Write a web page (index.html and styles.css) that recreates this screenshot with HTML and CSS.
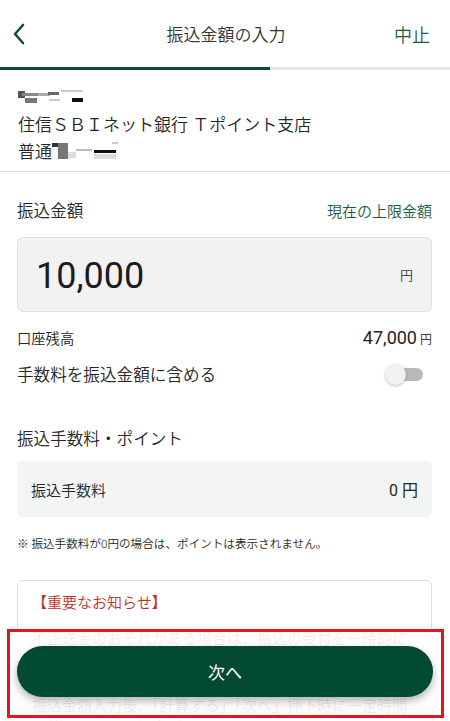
FILE: index.html
```html
<!DOCTYPE html>
<html lang="ja">
<head>
    <meta charset="UTF-8">
    <meta name="viewport" content="width=device-width, initial-scale=1.0">
    <title>振込金額の入力</title>
    <link rel="stylesheet" href="styles.css">
</head>
<body>
    <div class="screen">
        <header class="header">
            <svg class="back" width="14" height="22" viewBox="0 0 14 22">
                <path d="M11 2 L3 11 L11 20" fill="none" stroke="#124d37" stroke-width="2.6" stroke-linecap="round" stroke-linejoin="round"/>
            </svg>
            <h1 class="title">振込金額の入力</h1>
            <span class="cancel">中止</span>
        </header>
        <div class="progress"><div class="progress-bar"></div></div>

        <!-- 振込先 -->
        <section class="payee">
            <div class="payee-line">
                <svg class="mask" width="66" height="18" viewBox="0 0 66 18">
                    <rect x="0" y="3" width="7" height="7" fill="#555"/>
                    <rect x="4" y="5" width="16" height="3" fill="#888"/>
                    <rect x="7" y="10" width="12" height="5" fill="#777"/>
                    <rect x="20" y="5" width="12" height="3" fill="#aaa"/>
                    <rect x="30" y="4" width="11" height="3" fill="#666"/>
                    <rect x="43" y="2" width="22" height="2" fill="#ccc"/>
                    <rect x="31" y="11" width="11" height="2" fill="#ccc"/>
                    <rect x="54" y="10" width="11" height="4" fill="#111"/>
                </svg>
            </div>
            <div class="payee-line">住信ＳＢＩネット銀行 Ｔポイント支店</div>
            <div class="payee-line">普通<svg class="mask" width="66" height="18" viewBox="0 0 66 18">
                    <rect x="0" y="1" width="6" height="4" fill="#333"/>
                    <rect x="6" y="1" width="10" height="16" fill="#777"/>
                    <rect x="16" y="10" width="8" height="6" fill="#ddd"/>
                    <rect x="24" y="7" width="16" height="2" fill="#bbb"/>
                    <rect x="42" y="8" width="22" height="3" fill="#111"/>
                    <rect x="42" y="12" width="22" height="5" fill="#ddd"/>
                    <rect x="60" y="0" width="6" height="2" fill="#ccc"/>
                </svg></div>
        </section>

        <!-- 振込金額 -->
        <section class="form">
            <div class="row label-row">
                <span class="label">振込金額</span>
                <span class="link">現在の上限金額</span>
            </div>
            <div class="amount-box">
                <span class="amount">10,000</span>
                <span class="yen">円</span>
            </div>
            <div class="row balance-row">
                <span class="small-label">口座残高</span>
                <span class="balance">47,000<small>円</small></span>
            </div>
            <div class="row toggle-row">
                <span class="label">手数料を振込金額に含める</span>
                <span class="toggle"><span class="knob"></span></span>
            </div>

            <h2 class="label section-title">振込手数料・ポイント</h2>
            <div class="fee-box">
                <span>振込手数料</span>
                <span class="fee">0 円</span>
            </div>
            <p class="note">※ 振込手数料が0円の場合は、ポイントは表示されません。</p>

            <div class="notice">
                <p class="notice-title">【重要なお知らせ】</p>
                <p class="notice-text">不正送金のおそれがある場合は、振込の受付を一時的に停止させていただく場合があります。</p>
                <p class="notice-text">振込金額入力後、「計算する」「次へ」押下時に一定時間お待ちいただく場合があります。</p>
            </div>
        </section>

        <div class="footer">
            <button class="next">次へ</button>
        </div>
        <div class="highlight"></div>
    </div>
</body>
</html>
```

FILE: styles.css
```css
* {
    box-sizing: border-box;
}

body {
    margin: 0;
    font-family: Roboto, "Noto Sans CJK JP", sans-serif;
    font-weight: 350;
    color: #262626;
    background-color: #fff;
}

.screen {
    position: relative;
    width: 450px;
    height: 721px;
    overflow: hidden;
}

.header {
    display: flex;
    align-items: center;
    justify-content: space-between;
    height: 67px;
    padding: 0 20px 0 12px;
}

.back {
    display: block;
}

.title {
    margin: 0 0 0 32px;
    font-size: 17px;
    font-weight: 350;
    color: #333;
}

.cancel {
    font-size: 18px;
    color: #1d5a42;
}

.progress {
    height: 3px;
    background-color: #e6e6e6;
}

.progress-bar {
    width: 270px;
    height: 3px;
    background-color: #0d4a34;
}

.payee {
    padding: 13px 18px 7px;
    border-bottom: 1px solid #dedede;
}

.payee-line {
    display: flex;
    align-items: center;
    height: 27px;
    font-size: 17px;
    color: #262626;
}

.mask {
    display: block;
}

.form {
    padding: 0 18px 0 17px;
}

.row {
    display: flex;
    align-items: center;
    justify-content: space-between;
}

.label {
    font-size: 16.6px;
    font-weight: 350;
    color: #262626;
}

.label-row {
    height: 26px;
    margin-top: 25px;
}

.link {
    font-size: 15px;
    color: #1d5a42;
}

.amount-box {
    display: flex;
    align-items: center;
    justify-content: space-between;
    height: 75px;
    margin-top: 14px;
    padding: 0 18px 0 18px;
    background-color: #f2f2f2;
    border: 1px solid #e0e0e0;
    border-radius: 6px;
}

.amount {
    font-size: 36px;
    font-weight: 400;
    color: #1c1c1c;
    margin-top: 2px;
}

.yen {
    font-size: 13px;
    color: #333;
}

.balance-row {
    height: 26px;
    margin-top: 12px;
}

.small-label {
    font-size: 14.3px;
}

.balance {
    font-size: 18px;
    font-weight: 400;
    color: #222;
}

.balance small {
    margin-left: 3px;
    font-size: 12px;
    font-weight: 350;
}

.toggle-row {
    height: 30px;
    margin-top: 9px;
}

.toggle {
    position: relative;
    width: 27px;
    height: 13px;
    margin-right: 9px;
    border-radius: 7px;
    background-color: #b8b8b8;
}

.knob {
    position: absolute;
    left: -11px;
    top: -4px;
    width: 21px;
    height: 21px;
    border-radius: 50%;
    background-color: #f1f1f1;
    box-shadow: 0 1px 3px rgba(0, 0, 0, 0.25);
}

.section-title {
    margin: 38px 0 0;
    line-height: 26px;
}

.fee-box {
    display: flex;
    align-items: center;
    justify-content: space-between;
    height: 56px;
    margin-top: 8px;
    padding: 0 14px;
    background-color: #f3f5f5;
    border-radius: 6px;
    font-size: 15px;
}

.fee {
    font-size: 16px;
    font-weight: 400;
}

.note {
    margin: 18px 0 0;
    font-size: 11.6px;
    line-height: 18px;
    color: #262626;
}

.notice {
    margin-top: 27px;
    padding: 11px 16px 20px 14px;
    border: 1px solid #dcdcdc;
    border-radius: 6px;
}

.notice-title {
    margin: 0;
    font-size: 15px;
    line-height: 22px;
    color: #c0302b;
}

.notice-text {
    margin: 14px 0 0;
    font-size: 15px;
    line-height: 22px;
    color: #c0302b;
}

.notice-text + .notice-text {
    margin-top: 23px;
    color: #333;
}

.footer {
    position: absolute;
    left: 0;
    right: 0;
    top: 628px;
    bottom: 0;
    padding: 18px 17px 0 17px;
    background-color: rgba(255, 255, 255, 0.9);
}

.next {
    display: block;
    width: 100%;
    height: 51px;
    border: none;
    border-radius: 26px;
    background-color: #034a33;
    color: #fff;
    font-family: Roboto, "Noto Sans CJK JP", sans-serif;
    font-size: 17px;
    box-shadow: 0 4px 8px rgba(0, 0, 0, 0.3);
}

.highlight {
    position: absolute;
    left: 7px;
    top: 629px;
    width: 437px;
    height: 89px;
    border: 3px solid #e3161d;
}
```
